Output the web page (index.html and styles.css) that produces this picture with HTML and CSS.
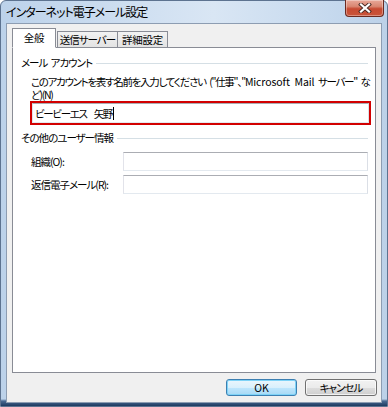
FILE: index.html
```html
<!DOCTYPE html>
<html lang="ja">
<head>
    <meta charset="UTF-8">
    <title>インターネット電子メール設定</title>
    <link rel="stylesheet" href="styles.css">
</head>
<body>
    <div class="window">
        <div class="titlebar">
            <div class="title">インターネット電子メール設定</div>
            <div class="close">
                <svg width="14" height="10" viewBox="0 0 14 10">
                    <path d="M3 1.5 L11 8.5 M11 1.5 L3 8.5" stroke="#4a2a24" stroke-width="4" stroke-linecap="square"/>
                    <path d="M3 1.5 L11 8.5 M11 1.5 L3 8.5" stroke="#ffffff" stroke-width="2.2" stroke-linecap="square"/>
                </svg>
            </div>
        </div>

        <div class="client">
            <div class="tabs">
                <div class="tab active">全般</div>
                <div class="tab tab-send">送信サーバー</div>
                <div class="tab tab-detail">詳細設定</div>
            </div>

            <div class="panel">
                <div class="group-title">メール アカウント</div>
                <p class="desc">このアカウントを表す名前を入力してください ("仕事"、"<span class="latin">Microsoft Mail</span> サーバー" な<br>ど)(N)</p>
                <div class="highlight">
                    <div class="textbox name-box">ビービーエス<span class="gap"></span>矢野<span class="caret"></span></div>
                </div>

                <div class="group-title">その他のユーザー情報</div>
                <div class="field-row">
                    <div class="field-label">組織(O):</div>
                    <div class="textbox"></div>
                </div>
                <div class="field-row">
                    <div class="field-label">返信電子メール(R):</div>
                    <div class="textbox"></div>
                </div>
            </div>

            <div class="buttons">
                <button class="btn btn-default">OK</button>
                <button class="btn">キャンセル</button>
            </div>
        </div>
    </div>
</body>
</html>
```

FILE: styles.css
```css
body {
    margin: 0;
    width: 388px;
    height: 407px;
    overflow: hidden;
    font-family: "Noto Sans CJK JP", sans-serif;
    font-size: 10.5px;
    font-feature-settings: "palt";
    letter-spacing: -1px;
    word-spacing: 2px;
    color: #000;
    background-color: #fff;
}
.window {
    box-sizing: border-box;
    height: 407px;
    display: flex;
    flex-direction: column;
    border: 1px solid #5d7390;
    border-radius: 6px 6px 0 0;
    padding-bottom: 3px;
    background:
        linear-gradient(to bottom, transparent calc(100% - 7px), #4a6a92 calc(100% - 5px), #1d3a60 100%),
        linear-gradient(to right, #bcd2ea 0%, #cfdff1 35%, #d9e6f4 55%, #c6d9ee 85%, #bcd1e8 100%);
}

.titlebar {
    height: 22px;
    display: flex;
    padding: 0 3px 0 5px;
}
.title {
    font-size: 12px;
    line-height: 22px;
    letter-spacing: -1px;
    white-space: nowrap;
}
.close {
    margin-left: auto;
    margin-top: -1px;
    width: 39px;
    height: 17px;
    box-sizing: border-box;
    border: 1px solid #6b2a20;
    border-top: none;
    border-radius: 0 0 4px 4px;
    background: linear-gradient(to bottom, #e9a899 0%, #d98772 40%, #c74a32 55%, #c9553a 100%);
    box-shadow: inset 0 0 0 1px rgba(255, 255, 255, 0.35);
    display: flex;
    align-items: center;
    justify-content: center;
}

.client {
    flex: 1;
    margin: 0 5px;
    border: 1px solid #8d9db2;
    background-color: #f0f0f0;
    padding: 4px 5px 6px 5px;
    display: flex;
    flex-direction: column;
}

.tabs {
    display: flex;
    align-items: flex-end;
    margin-bottom: -1px;
    position: relative;
    z-index: 1;
}
.tab {
    box-sizing: border-box;
    height: 17px;
    border: 1px solid #898c95;
    text-align: center;
    line-height: 15px;
    white-space: nowrap;
    background: linear-gradient(to bottom, #f2f2f2, #e3e3e3);
}
.tab.active {
    width: 44px;
    height: 20px;
    line-height: 18px;
    letter-spacing: -0.2px;
    background-color: #fff;
    background-image: none;
    border-bottom-color: #fff;
}
.tab-send {
    width: 61px;
    margin-left: 1px;
}
.tab-detail {
    width: 50px;
    border-left: none;
    letter-spacing: -0.2px;
}

.panel {
    flex: 1;
    background-color: #fff;
    border: 1px solid #898c95;
    padding: 0 7px 0 8px;
}

.group-title {
    display: flex;
    align-items: center;
    line-height: 14px;
    margin-top: 8px;
    white-space: nowrap;
}
.group-title::after {
    content: "";
    flex: 1;
    border-top: 1px solid #d5dfe5;
    margin-left: 4px;
}
.group-title + .field-row {
    margin-top: 7px;
}
.highlight + .group-title {
    margin-top: 6px;
}

.desc {
    margin: 5px 0 0 10px;
    line-height: 13px;
    white-space: nowrap;
    letter-spacing: -1.3px;
    word-spacing: 2.5px;
}
.latin {
    letter-spacing: -0.1px;
}

.highlight {
    margin: 0 -3px 0 9px;
    border: 2px solid #d20000;
    height: 20px;
}
.textbox {
    box-sizing: border-box;
    height: 19px;
    border: 1px solid;
    border-color: #abadb3 #dbdfe6 #e3e9ef #e2e3ea;
    background-color: #fff;
    line-height: 17px;
    padding-left: 2px;
    display: flex;
    align-items: center;
    white-space: nowrap;
}
.name-box {
    height: 20px;
    letter-spacing: -1.3px;
}
.gap {
    display: inline-block;
    width: 7px;
}
.caret {
    display: inline-block;
    width: 1px;
    height: 13px;
    background-color: #000;
    margin-left: 1px;
}

.field-row {
    display: flex;
    align-items: center;
    margin: 4px 0 0 10px;
}
.field-label {
    width: 92px;
    white-space: nowrap;
}
.field-row .textbox {
    flex: 1;
}

.buttons {
    display: flex;
    justify-content: flex-end;
    gap: 8px;
    margin-top: 6px;
    margin-right: -1px;
}
.btn {
    box-sizing: border-box;
    width: 72px;
    height: 17px;
    padding: 0;
    font-family: inherit;
    font-size: 10.5px;
    font-feature-settings: "palt";
    letter-spacing: -1px;
    line-height: 15px;
    color: #000;
    border: 1px solid #707070;
    border-radius: 3px;
    background: linear-gradient(to bottom, #f2f2f2 0%, #ebebeb 50%, #dddddd 51%, #cfcfcf 100%);
    box-shadow: inset 0 0 0 1px rgba(255, 255, 255, 0.7);
}
.btn-default {
    width: 71px;
    letter-spacing: 0;
    border-color: #3c7fb1;
    background: linear-gradient(to bottom, #eaf6fd 0%, #d9f0fc 50%, #bee6fd 51%, #a7d9f5 100%);
    box-shadow: inset 0 0 0 1px #7ed3f7;
}
```
